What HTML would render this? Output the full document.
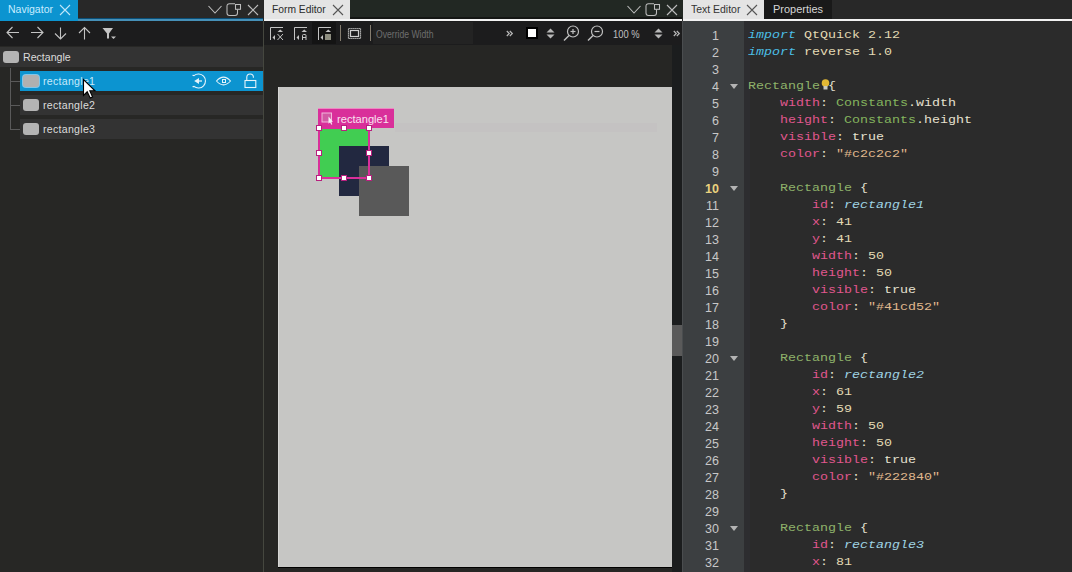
<!DOCTYPE html><html><head><meta charset="utf-8"><style>
*{margin:0;padding:0;box-sizing:border-box}
html,body{width:1072px;height:572px;overflow:hidden;background:#262626;font-family:"Liberation Sans",sans-serif}
div,span,svg{position:absolute}
.t{white-space:pre;transform-origin:0 0;line-height:1}
.row{height:20px;background:#333333}
.ico{width:16px;height:12px;border-radius:3px;background:#b4b4b4}
.ln{width:40px;text-align:right;left:679px;font-size:12.5px;color:#c8c8c8;line-height:17px;white-space:pre}
.cl{left:748px;font-family:"Liberation Mono",monospace;font-size:11px;white-space:pre;color:#e3dab4;line-height:17px;transform:scaleX(1.2121);transform-origin:0 0}
.kw{position:static;color:#4cbfe6;font-style:italic}
.ty{position:static;color:#8fb36a}
.pr{position:static;color:#e0578e}
.cn{position:static;color:#84b45e}
.st{position:static;color:#e0b98e}
.id{position:static;color:#9fd3e3;font-style:italic}
.wt{position:static;color:#e6e1cf}
.fold{width:0;height:0;border-left:4px solid transparent;border-right:4px solid transparent;border-top:5px solid #b4b4b4;left:730px}
</style></head><body>
<div style="left:0;top:0;width:263px;height:572px;background:#272725"></div>
<div style="left:0;top:0;width:263px;height:18px;background:#282828"></div>
<div style="left:0;top:18px;width:263px;height:1px;background:#0a4f78"></div>
<div style="left:0;top:19px;width:263px;height:2px;background:#4690b8"></div>
<div style="left:0;top:0;width:78px;height:21px;background:#0c94d0"></div>
<span class="t" style="left:8px;top:4px;font-size:11.5px;color:#c8ecff;transform:scaleX(0.914)">Navigator</span>
<svg style="left:59px;top:4px" width="12" height="12" viewBox="0 0 12 12"><path d="M1 1L11 11M11 1L1 11" stroke="#bfe6fa" stroke-width="1.1" fill="none"/></svg>
<svg style="left:208px;top:5px" width="14" height="10" viewBox="0 0 14 10"><path d="M0.5 1L7 8L13.5 1" stroke="#bdbdbd" stroke-width="1.1" fill="none"/></svg>
<svg style="left:226px;top:2px" width="16" height="15" viewBox="0 0 16 15"><path d="M9 1.8H3.5Q1 1.8 1 4.3V11Q1 13.5 3.5 13.5H9Q11.5 13.5 11.5 11V7.5" stroke="#bdbdbd" stroke-width="1.05" fill="none"/><rect x="9.5" y="2.5" width="5" height="4.8" stroke="#bdbdbd" stroke-width="1.05" fill="none"/></svg>
<svg style="left:247px;top:4px" width="12" height="12" viewBox="0 0 12 12"><path d="M1 1L11 11M11 1L1 11" stroke="#bdbdbd" stroke-width="1.1" fill="none"/></svg>
<div style="left:0;top:21px;width:263px;height:25px;background:#1c1c1d"></div>
<svg style="left:6px;top:26px" width="14" height="13" viewBox="0 0 14 13"><path d="M13 6.5H1.5M6.5 1L1 6.5L6.5 12" stroke="#c4c4c4" stroke-width="1.1" fill="none"/></svg>
<svg style="left:30px;top:26px" width="14" height="13" viewBox="0 0 14 13"><path d="M1 6.5H12.5M7.5 1L13 6.5L7.5 12" stroke="#c4c4c4" stroke-width="1.1" fill="none"/></svg>
<svg style="left:54px;top:27px" width="13" height="13" viewBox="0 0 13 13"><path d="M6.5 0.5V12M1 6.5L6.5 12L12 6.5" stroke="#c4c4c4" stroke-width="1.1" fill="none"/></svg>
<svg style="left:78px;top:26px" width="13" height="14" viewBox="0 0 13 14"><path d="M6.5 13.5V1.5M1 7L6.5 1.5L12 7" stroke="#c4c4c4" stroke-width="1.1" fill="none"/></svg>
<svg style="left:102px;top:27px" width="15" height="13" viewBox="0 0 15 13"><path d="M0.5 1H11L7 6.5V11.5H5V6.5Z" fill="#c4c4c4"/><path d="M9 9.5H14L11.5 12Z" fill="#c4c4c4"/></svg>
<div class="row" style="left:0;top:47px;width:263px"></div>
<div class="row" style="left:20px;top:71px;width:243px;background:#0c94d0"></div>
<div class="row" style="left:20px;top:95px;width:243px"></div>
<div class="row" style="left:20px;top:119px;width:243px"></div>
<div style="left:10px;top:68px;width:1px;height:62px;background:#5a5a5a"></div>
<div style="left:10px;top:81px;width:10px;height:1px;background:#5a5a5a"></div>
<div style="left:10px;top:105px;width:10px;height:1px;background:#5a5a5a"></div>
<div style="left:10px;top:129px;width:10px;height:1px;background:#5a5a5a"></div>
<div class="ico" style="left:3px;top:51px"></div>
<div class="ico" style="left:23px;top:75px;background:#b0b0b0;box-shadow:0 0 0 1px #7fc6ea"></div>
<div class="ico" style="left:23px;top:99px"></div>
<div class="ico" style="left:23px;top:123px"></div>
<span class="t" style="left:23px;top:52px;font-size:10.6px;color:#dcdcdc;transform:scaleX(1.0)">Rectangle</span>
<span class="t" style="left:43px;top:76px;font-size:10.6px;color:#c6eafb;letter-spacing:0.28px">rectangle1</span>
<span class="t" style="left:43px;top:100px;font-size:10.6px;color:#dcdcdc;letter-spacing:0.28px">rectangle2</span>
<span class="t" style="left:43px;top:124px;font-size:10.6px;color:#dcdcdc;letter-spacing:0.28px">rectangle3</span>
<svg style="left:188px;top:72px" width="20" height="18" viewBox="0 0 20 18"><path d="M4.5 3.2L6 3.6A7 7 0 1 1 6 14.4L4.5 14.8" stroke="#e6f4fb" stroke-width="1.1" fill="none"/><path d="M14 9H10" stroke="#e6f4fb" stroke-width="1.3"/><path d="M6.2 9L11 6V12Z" fill="#e6f4fb"/></svg>
<svg style="left:215px;top:75px" width="18" height="12" viewBox="0 0 18 12"><path d="M1.5 6Q8.5 -1.8 15.5 6Q8.5 13.8 1.5 6Z" stroke="#e6f4fb" stroke-width="1.1" fill="none"/><rect x="7.5" y="4.5" width="3" height="3" stroke="#e6f4fb" stroke-width="1" fill="none"/></svg>
<svg style="left:242px;top:72px" width="16" height="18" viewBox="0 0 16 18"><path d="M4.8 8.5V5.3A3.3 3.3 0 0 1 11.4 5.3V5.8" stroke="#e6f4fb" stroke-width="1.1" fill="none"/><rect x="3" y="8.5" width="10.8" height="7" stroke="#e6f4fb" stroke-width="1.1" fill="none"/></svg>
<svg style="left:82px;top:78px" width="16" height="22" viewBox="0 0 16 22"><path d="M1.5 1.5V17.5L5.2 13.8L8.2 20L10.6 18.9L7.8 12.8H13Z" fill="#fff" stroke="#000" stroke-width="1.1" stroke-linejoin="miter"/></svg>
<div style="left:263px;top:21px;width:1px;height:551px;background:#45473f"></div>
<div style="left:264px;top:0;width:419px;height:19px;background:#222823"></div>
<div style="left:264px;top:17px;width:418px;height:2px;background:#141614"></div>
<div style="left:264px;top:0;width:86px;height:21px;background:#e4e4e4"></div>
<div style="left:264px;top:19px;width:418px;height:2px;background:#f2f2f2"></div>
<span class="t" style="left:272px;top:4px;font-size:11.5px;color:#2a2a2a;transform:scaleX(0.895)">Form Editor</span>
<svg style="left:332px;top:4px" width="12" height="12" viewBox="0 0 12 12"><path d="M1 1L11 11M11 1L1 11" stroke="#555" stroke-width="1.1" fill="none"/></svg>
<svg style="left:627px;top:5px" width="14" height="10" viewBox="0 0 14 10"><path d="M0.5 1L7 8L13.5 1" stroke="#bdbdbd" stroke-width="1.1" fill="none"/></svg>
<svg style="left:645px;top:2px" width="16" height="15" viewBox="0 0 16 15"><path d="M9 1.8H3.5Q1 1.8 1 4.3V11Q1 13.5 3.5 13.5H9Q11.5 13.5 11.5 11V7.5" stroke="#bdbdbd" stroke-width="1.05" fill="none"/><rect x="9.5" y="2.5" width="5" height="4.8" stroke="#bdbdbd" stroke-width="1.05" fill="none"/></svg>
<svg style="left:666px;top:4px" width="12" height="12" viewBox="0 0 12 12"><path d="M1 1L11 11M11 1L1 11" stroke="#bdbdbd" stroke-width="1.1" fill="none"/></svg>
<div style="left:264px;top:21px;width:418px;height:24px;background:#1c1c1d"></div>
<div style="left:312px;top:22px;width:24px;height:22px;background:#141414"></div>
<svg style="left:269px;top:26px" width="15" height="15" viewBox="0 0 15 15"><path d="M1.5 14V1.5H14" stroke="#c4c4c4" stroke-width="1" fill="none"/><path d="M6 9L3.5 11.5L6 14Z" fill="#c4c4c4"/><path d="M8.5 6H14L11.25 3.5Z" fill="#c4c4c4"/><path d="M8.5 8L14 14M14 8L8.5 14" stroke="#c4c4c4" stroke-width="1" fill="none"/></svg>
<svg style="left:293px;top:26px" width="15" height="15" viewBox="0 0 15 15"><path d="M1.5 14V1.5H14" stroke="#c4c4c4" stroke-width="1" fill="none"/><path d="M6 9L3.5 11.5L6 14Z" fill="#c4c4c4"/><path d="M8.5 6H14L11.25 3.5Z" fill="#c4c4c4"/><path d="M9.5 14V9.5Q9.5 8.5 10.5 8.5H12Q13 8.5 13 9.5V14M9.5 11.5H13" stroke="#c4c4c4" stroke-width="1" fill="none"/></svg>
<svg style="left:317px;top:26px" width="15" height="15" viewBox="0 0 15 15"><path d="M1.5 14V1.5H14" stroke="#c4c4c4" stroke-width="1" fill="none"/><path d="M6 9L3.5 11.5L6 14Z" fill="#c4c4c4"/><path d="M8.5 6H14L11.25 3.5Z" fill="#c4c4c4"/><rect x="8" y="8" width="6" height="6" fill="#8e8e80"/></svg>
<div style="left:340px;top:25px;width:1px;height:16px;background:#857d70"></div>
<div style="left:370px;top:25px;width:1px;height:16px;background:#857d70"></div>
<svg style="left:347px;top:27px" width="15" height="13" viewBox="0 0 15 13"><rect x="3.5" y="3.5" width="8" height="6" stroke="#d0d0d0" stroke-width="1.2" fill="none"/><rect x="1.5" y="1.5" width="12" height="10" stroke="#d0d0d0" stroke-width="1.2" stroke-dasharray="1.2 0.8" fill="none"/></svg>
<div style="left:373px;top:22px;width:100px;height:22px;background:#232323"></div>
<span class="t" style="left:376px;top:30px;font-size:10px;color:#6e6e6e;transform:scaleX(0.862)">Override Width</span>
<svg style="left:506px;top:30px" width="8" height="7" viewBox="0 0 8 7"><path d="M0.8 1L3.3 3.5L0.8 6M3.8 1L6.3 3.5L3.8 6" stroke="#b8b8b8" stroke-width="1.2" fill="none"/></svg>
<div style="left:526px;top:27px;width:12px;height:12px;background:#000"></div>
<div style="left:528px;top:29px;width:8px;height:8px;background:#fff"></div>
<svg style="left:546px;top:28px" width="9" height="11" viewBox="0 0 9 11"><path d="M0.5 4.5L4.5 0.5L8.5 4.5Z M0.5 6.5L4.5 10.5L8.5 6.5Z" fill="#b8b8b8"/></svg>
<svg style="left:563px;top:25px" width="17" height="17" viewBox="0 0 17 17"><circle cx="10" cy="6.5" r="5.5" stroke="#c0c0c0" stroke-width="1.2" fill="none"/><path d="M6 10.5L1 15.5" stroke="#c0c0c0" stroke-width="1.4"/><path d="M7.5 6.5H12.5" stroke="#c0c0c0" stroke-width="1.2"/><path d="M10 4V9" stroke="#c0c0c0" stroke-width="1.2"/></svg>
<svg style="left:587px;top:25px" width="17" height="17" viewBox="0 0 17 17"><circle cx="10" cy="6.5" r="5.5" stroke="#c0c0c0" stroke-width="1.2" fill="none"/><path d="M6 10.5L1 15.5" stroke="#c0c0c0" stroke-width="1.4"/><path d="M7.5 6.5H12.5" stroke="#c0c0c0" stroke-width="1.2"/></svg>
<span class="t" style="left:613px;top:29px;font-size:11px;color:#c0c0c0;transform:scaleX(0.85)">100 %</span>
<svg style="left:654px;top:28px" width="9" height="11" viewBox="0 0 9 11"><path d="M0.5 4.5L4.5 0.5L8.5 4.5Z M0.5 6.5L4.5 10.5L8.5 6.5Z" fill="#b8b8b8"/></svg>
<svg style="left:673px;top:30px" width="8" height="7" viewBox="0 0 8 7"><path d="M0.8 1L3.3 3.5L0.8 6M3.8 1L6.3 3.5L3.8 6" stroke="#b8b8b8" stroke-width="1.2" fill="none"/></svg>
<div style="left:264px;top:45px;width:408px;height:527px;background:#262624"></div>
<div style="left:278px;top:87px;width:394px;height:480px;background:#c6c6c4;border-left:1px solid #d6d6d4"></div>
<div style="left:278px;top:567px;width:394px;height:1px;background:#000"></div>
<div style="left:395px;top:123px;width:262px;height:9px;background:#c4c2c2"></div>
<div style="left:672px;top:45px;width:11px;height:527px;background:#1b1d1e"></div>
<div style="left:672px;top:325px;width:11px;height:31px;background:#5a5a5a"></div>
<div style="left:319px;top:128px;width:50px;height:50px;background:#41cd52"></div>
<div style="left:339px;top:146px;width:50px;height:50px;background:#222840"></div>
<div style="left:359px;top:166px;width:50px;height:50px;background:#595959"></div>
<div style="left:318px;top:109px;width:76px;height:19px;background:#d92f9a"></div>
<div style="left:318px;top:108px;width:76px;height:1px;background:#ee88c4"></div>
<svg style="left:321px;top:112px" width="13" height="13" viewBox="0 0 13 13"><rect x="1" y="1" width="9.5" height="9" fill="#d25aa4" stroke="#f2b8dc" stroke-width="1"/><path d="M7.5 4.5V11.8L9 10.3L10.3 12.8L11.3 12.3L10.1 9.8H12Z" fill="#f4f0f4"/></svg>
<span class="t" style="left:337px;top:114px;font-size:11px;color:#f8e2f0;transform:scaleX(1.01)">rectangle1</span>
<div style="left:318px;top:127px;width:52px;height:52px;border:2px solid #d92f9a"></div>
<div style="left:316px;top:125px;width:6px;height:6px;background:#fff;border:1px solid #b8207e"></div>
<div style="left:316px;top:150px;width:6px;height:6px;background:#fff;border:1px solid #b8207e"></div>
<div style="left:316px;top:175px;width:6px;height:6px;background:#fff;border:1px solid #b8207e"></div>
<div style="left:341px;top:125px;width:6px;height:6px;background:#fff;border:1px solid #b8207e"></div>
<div style="left:341px;top:175px;width:6px;height:6px;background:#fff;border:1px solid #b8207e"></div>
<div style="left:366px;top:125px;width:6px;height:6px;background:#fff;border:1px solid #b8207e"></div>
<div style="left:366px;top:150px;width:6px;height:6px;background:#fff;border:1px solid #b8207e"></div>
<div style="left:366px;top:175px;width:6px;height:6px;background:#fff;border:1px solid #b8207e"></div>
<div style="left:683px;top:0;width:389px;height:19px;background:#282828"></div>
<div style="left:683px;top:0;width:81px;height:21px;background:#e4e4e4"></div>
<div style="left:764px;top:0;width:68px;height:19px;background:#191919"></div>
<div style="left:683px;top:19px;width:389px;height:2px;background:#f2f2f2"></div>
<span class="t" style="left:691px;top:4px;font-size:11.5px;color:#333333;transform:scaleX(0.909)">Text Editor</span>
<svg style="left:746px;top:4px" width="12" height="12" viewBox="0 0 12 12"><path d="M1 1L11 11M11 1L1 11" stroke="#555" stroke-width="1.1" fill="none"/></svg>
<span class="t" style="left:773px;top:4px;font-size:11.5px;color:#d6d6d6;transform:scaleX(0.954)">Properties</span>
<div style="left:682px;top:21px;width:62px;height:551px;background:#3c3f41;border-left:1px solid #4a4d4f"></div>
<div style="left:744px;top:21px;width:328px;height:551px;background:#2b2b2b"></div>
<div style="left:744px;top:21px;width:6px;height:551px;background:#2d2d30"></div>
<span class="ln" style="top:28.0px;color:#c8c8c8;">1</span>
<span class="cl" style="top:26.5px"><span class="kw">import</span> QtQuick 2.12</span>
<span class="ln" style="top:45.0px;color:#c8c8c8;">2</span>
<span class="cl" style="top:43.5px"><span class="kw">import</span> reverse 1.0</span>
<span class="ln" style="top:62.0px;color:#c8c8c8;">3</span>
<span class="ln" style="top:79.0px;color:#c8c8c8;">4</span>
<span class="cl" style="top:77.5px"><span class="ty">Rectangle</span><span class="wt"> {</span></span>
<div class="fold" style="top:83.5px"></div>
<span class="ln" style="top:96.0px;color:#c8c8c8;">5</span>
<span class="cl" style="top:94.5px">    <span class="pr">width</span><span class="wt">: </span><span class="cn">Constants</span><span class="wt">.width</span></span>
<span class="ln" style="top:113.0px;color:#c8c8c8;">6</span>
<span class="cl" style="top:111.5px">    <span class="pr">height</span><span class="wt">: </span><span class="cn">Constants</span><span class="wt">.height</span></span>
<span class="ln" style="top:130.0px;color:#c8c8c8;">7</span>
<span class="cl" style="top:128.5px">    <span class="pr">visible</span><span class="wt">: true</span></span>
<span class="ln" style="top:147.0px;color:#c8c8c8;">8</span>
<span class="cl" style="top:145.5px">    <span class="pr">color</span><span class="wt">: </span><span class="st">"#c2c2c2"</span></span>
<span class="ln" style="top:164.0px;color:#c8c8c8;">9</span>
<span class="ln" style="top:181.0px;color:#ead27e;font-weight:bold;">10</span>
<span class="cl" style="top:179.5px">    <span class="ty">Rectangle</span><span class="wt"> {</span></span>
<div class="fold" style="top:185.5px"></div>
<span class="ln" style="top:198.0px;color:#c8c8c8;">11</span>
<span class="cl" style="top:196.5px">        <span class="pr">id</span><span class="wt">: </span><span class="id">rectangle1</span></span>
<span class="ln" style="top:215.0px;color:#c8c8c8;">12</span>
<span class="cl" style="top:213.5px">        <span class="pr">x</span><span class="wt">: </span>41</span>
<span class="ln" style="top:232.0px;color:#c8c8c8;">13</span>
<span class="cl" style="top:230.5px">        <span class="pr">y</span><span class="wt">: </span>41</span>
<span class="ln" style="top:249.0px;color:#c8c8c8;">14</span>
<span class="cl" style="top:247.5px">        <span class="pr">width</span><span class="wt">: </span>50</span>
<span class="ln" style="top:266.0px;color:#c8c8c8;">15</span>
<span class="cl" style="top:264.5px">        <span class="pr">height</span><span class="wt">: </span>50</span>
<span class="ln" style="top:283.0px;color:#c8c8c8;">16</span>
<span class="cl" style="top:281.5px">        <span class="pr">visible</span><span class="wt">: true</span></span>
<span class="ln" style="top:300.0px;color:#c8c8c8;">17</span>
<span class="cl" style="top:298.5px">        <span class="pr">color</span><span class="wt">: </span><span class="st">"#41cd52"</span></span>
<span class="ln" style="top:317.0px;color:#c8c8c8;">18</span>
<span class="cl" style="top:315.5px">    <span class="wt">}</span></span>
<span class="ln" style="top:334.0px;color:#c8c8c8;">19</span>
<span class="ln" style="top:351.0px;color:#c8c8c8;">20</span>
<span class="cl" style="top:349.5px">    <span class="ty">Rectangle</span><span class="wt"> {</span></span>
<div class="fold" style="top:355.5px"></div>
<span class="ln" style="top:368.0px;color:#c8c8c8;">21</span>
<span class="cl" style="top:366.5px">        <span class="pr">id</span><span class="wt">: </span><span class="id">rectangle2</span></span>
<span class="ln" style="top:385.0px;color:#c8c8c8;">22</span>
<span class="cl" style="top:383.5px">        <span class="pr">x</span><span class="wt">: </span>61</span>
<span class="ln" style="top:402.0px;color:#c8c8c8;">23</span>
<span class="cl" style="top:400.5px">        <span class="pr">y</span><span class="wt">: </span>59</span>
<span class="ln" style="top:419.0px;color:#c8c8c8;">24</span>
<span class="cl" style="top:417.5px">        <span class="pr">width</span><span class="wt">: </span>50</span>
<span class="ln" style="top:436.0px;color:#c8c8c8;">25</span>
<span class="cl" style="top:434.5px">        <span class="pr">height</span><span class="wt">: </span>50</span>
<span class="ln" style="top:453.0px;color:#c8c8c8;">26</span>
<span class="cl" style="top:451.5px">        <span class="pr">visible</span><span class="wt">: true</span></span>
<span class="ln" style="top:470.0px;color:#c8c8c8;">27</span>
<span class="cl" style="top:468.5px">        <span class="pr">color</span><span class="wt">: </span><span class="st">"#222840"</span></span>
<span class="ln" style="top:487.0px;color:#c8c8c8;">28</span>
<span class="cl" style="top:485.5px">    <span class="wt">}</span></span>
<span class="ln" style="top:504.0px;color:#c8c8c8;">29</span>
<span class="ln" style="top:521.0px;color:#c8c8c8;">30</span>
<span class="cl" style="top:519.5px">    <span class="ty">Rectangle</span><span class="wt"> {</span></span>
<div class="fold" style="top:525.5px"></div>
<span class="ln" style="top:538.0px;color:#c8c8c8;">31</span>
<span class="cl" style="top:536.5px">        <span class="pr">id</span><span class="wt">: </span><span class="id">rectangle3</span></span>
<span class="ln" style="top:555.0px;color:#c8c8c8;">32</span>
<span class="cl" style="top:553.5px">        <span class="pr">x</span><span class="wt">: </span>81</span>
<svg style="left:821px;top:79px" width="9" height="11" viewBox="0 0 9 11"><circle cx="4.5" cy="4" r="3.8" fill="#e2b834"/><rect x="2.5" y="7" width="4" height="3.5" fill="#c8c8c0"/></svg>
</body></html>
